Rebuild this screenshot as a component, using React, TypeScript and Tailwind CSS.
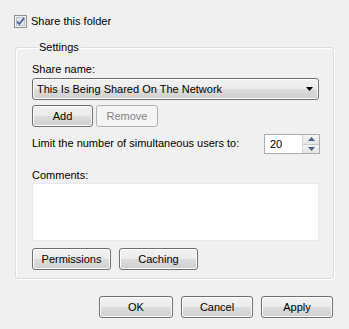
import React from "react";

const btn =
  "h-[22px] rounded-[3px] border border-[#707070] bg-[linear-gradient(to_bottom,#f2f2f2_0%,#ebebeb_50%,#dddddd_50%,#cfcfcf_100%)] shadow-[inset_0_0_0_1px_#fcfcfc] text-[11px] text-black flex items-center justify-center";

export default function App() {
  return (
    <div
      className="w-[349px] h-[329px] bg-[#f0f0f0] text-black text-[11px] leading-[13px] flex flex-col"
      style={{ fontFamily: '"Liberation Sans", Arial, sans-serif' }}
    >
      {/* Share this folder */}
      <div className="flex items-center gap-[4px] pl-[14px] pt-[15px]">
        <svg width="13" height="13" viewBox="0 0 13 13">
          <rect x="0.5" y="0.5" width="12" height="12" fill="#f4f4f4" stroke="#8e8f8f" />
          <rect x="2.5" y="2.5" width="8" height="8" fill="#dfe6ee" stroke="#b8c1cc" />
          <path d="M3 6.5 L5.3 9 L10 3.3" fill="none" stroke="#4a5f97" strokeWidth="1.8" />
        </svg>
        <span>Share this folder</span>
      </div>

      {/* Settings group */}
      <fieldset className="ml-[15px] mt-[13px] w-[319px] h-[238px] rounded-[3px] border border-[#d5dfe5] shadow-[inset_1px_1px_0_#fff,1px_1px_0_#fff] pl-[16px] pr-[13px]">
        <legend className="ml-[5px] px-[2px] leading-[13px]">Settings</legend>
        <div className="pt-[9px] flex flex-col">
          <div className="leading-[13px]">Share name:</div>
          <div className={btn + " mt-[2px] w-[287px] !justify-between px-[4px]"}>
            <span>This Is Being Shared On The Network</span>
            <svg width="7" height="4" viewBox="0 0 7 4" className="mr-[1px]">
              <path d="M0 0 H7 L3.5 4 Z" fill="#000" />
            </svg>
          </div>
          <div className="flex gap-[3px] mt-[5px]">
            <div className={btn + " w-[61px]"}>Add</div>
            <div className="h-[22px] w-[62px] rounded-[3px] border border-[#adb2b5] bg-[#f4f4f4] text-[#838383] flex items-center justify-center">
              Remove
            </div>
          </div>
          <div className="flex items-center justify-between mt-[7px] pr-[0px]">
            <span className="-mt-[2px]">Limit the number of simultaneous users to:</span>
            <div className="flex h-[20px] w-[56px] border border-[#abadb3] bg-white">
              <span className="flex-1 pl-[5px] flex items-center">20</span>
              <div className="w-[17px] flex flex-col border-l border-[#d5d5d5]">
                <div className="flex-1 bg-[linear-gradient(to_bottom,#f5f5f5,#e5e5e5)] border-b border-[#c9c9c9] flex items-center justify-center">
                  <svg width="7" height="4" viewBox="0 0 7 4">
                    <path d="M0 4 H7 L3.5 0 Z" fill="#4d6185" />
                  </svg>
                </div>
                <div className="flex-1 bg-[linear-gradient(to_bottom,#f5f5f5,#e5e5e5)] flex items-center justify-center">
                  <svg width="7" height="4" viewBox="0 0 7 4">
                    <path d="M0 0 H7 L3.5 4 Z" fill="#4d6185" />
                  </svg>
                </div>
              </div>
            </div>
          </div>
          <div className="mt-[15px] leading-[13px]">Comments:</div>
          <div className="mt-[1px] w-[287px] h-[58px] border border-[#e3e9ef] bg-white shadow-[inset_0_0_0_1px_#fff]" />
          <div className="flex gap-[8px] mt-[7px]">
            <div className={btn + " w-[79px]"}>Permissions</div>
            <div className={btn + " w-[79px]"}>Caching</div>
          </div>
        </div>
      </fieldset>

      {/* bottom buttons */}
      <div className="flex gap-[8px] pl-[99px] mt-[17px]">
        <div className={btn + " w-[74px]"}>OK</div>
        <div className={btn + " w-[72px]"}>Cancel</div>
        <div className={btn + " w-[72px]"}>Apply</div>
      </div>
    </div>
  );
}
